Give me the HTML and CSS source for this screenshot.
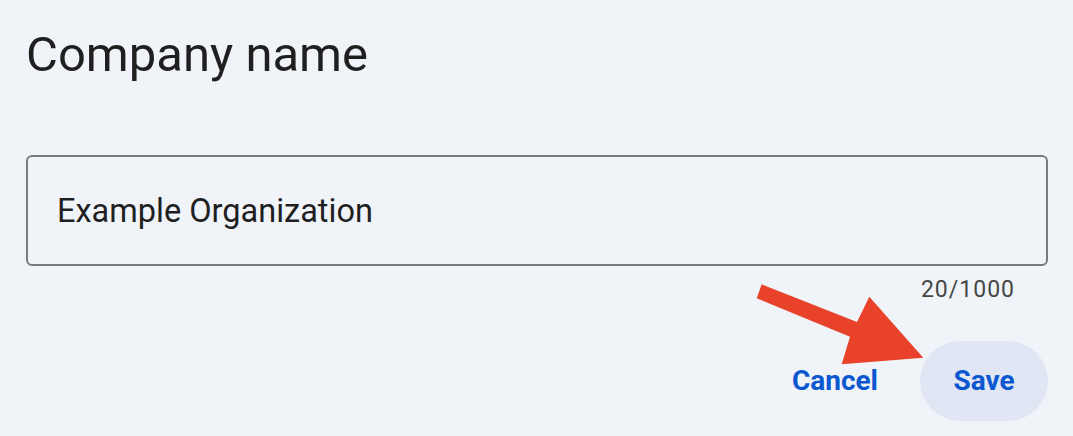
FILE: index.html
```html
<!DOCTYPE html>
<html lang="en">
<head>
<meta charset="utf-8">
<title>Company name</title>
<link rel="stylesheet" href="styles.css">
</head>
<body>
<main class="page">
  <h1 class="title">Company name</h1>
  <div class="field">
    <div class="field-box">
      <span class="field-value">Example Organization</span>
    </div>
    <div class="counter">20/1000</div>
  </div>
  <div class="actions">
    <button class="btn btn-text" type="button">Cancel</button>
    <button class="btn btn-tonal" type="button">Save</button>
  </div>
  <svg class="annotation-arrow" width="180" height="100" viewBox="750 275 180 100" aria-hidden="true">
    <polygon fill="#e8432a" points="761.7,284.3 857,322 869.3,296.7 923.3,357.7 841.7,364.3 850,336.7 756.7,298.3"/>
  </svg>
</main>
</body>
</html>
```

FILE: styles.css
```css
html, body {
  margin: 0;
  padding: 0;
  background: #f0f4f9;
}

body {
  width: 1073px;
  height: 436px;
  overflow: hidden;
  font-family: Roboto, "Liberation Sans", sans-serif;
}

.page {
  position: relative;
  padding: 25px 25px 0 26px;
  display: flex;
  flex-direction: column;
}

.title {
  margin: 0;
  font-size: 49px;
  line-height: 60px;
  font-weight: 400;
  color: #1f1f1f;
}

.field {
  margin-top: 70px;
  display: flex;
  flex-direction: column;
}

.field-box {
  height: 111px;
  box-sizing: border-box;
  border: 2px solid #7a7b7c;
  border-radius: 6px;
  display: flex;
  align-items: center;
  padding-left: 29px;
}

.field-value {
  font-size: 32.5px;
  line-height: 40px;
  color: #1f1f1f;
}

.counter {
  align-self: flex-end;
  margin-top: 11px;
  margin-right: 33px;
  font-size: 23px;
  line-height: 26px;
  letter-spacing: 1px;
  color: #444746;
}

.actions {
  margin-top: 37.5px;
  display: flex;
  justify-content: flex-end;
  gap: 9px;
}

.btn {
  height: 80px;
  border: none;
  border-radius: 40px;
  padding: 0 33px;
  font-family: Roboto, "Liberation Sans", sans-serif;
  font-size: 28px;
  font-weight: 700;
  color: #0b57d0;
  background: transparent;
}

.btn-tonal {
  width: 128px;
  padding: 0;
  background: #e0e6f4;
}

.annotation-arrow {
  position: absolute;
  left: 750px;
  top: 275px;
}
```
